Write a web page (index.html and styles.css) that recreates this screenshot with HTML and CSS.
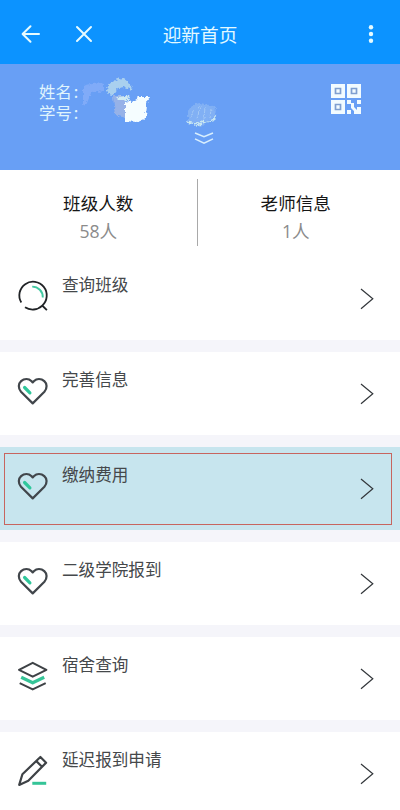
FILE: index.html
```html
<!DOCTYPE html>
<html lang="zh-CN">
<head>
<meta charset="utf-8">
<title>迎新首页</title>
<link rel="stylesheet" href="styles.css">
</head>
<body>
<svg class="defs" width="0" height="0">
  <symbol id="heart" viewBox="0 0 32 32">
    <path d="M15.700 28.400 4 16.700C.9 13.300 1.300 8.600 4.100 6.100 7.300 3.200 11.800 3.400 14.300 6l1.400 1.400L17.100 6c2.500-2.600 7-2.800 10.200.1 2.800 2.500 3.200 7.200.1 10.600z" fill="none" stroke="#41464b" stroke-width="2.200" stroke-linejoin="round"/>
    <path d="m7.600 12.500 5.300 5.300" stroke="#2fc79b" stroke-width="3.200" stroke-linecap="round"/>
  </symbol>
  <symbol id="chevron" viewBox="0 0 14 22">
    <path d="m1 1 11.800 9.800L1 20.800" fill="none" stroke="#33373b" stroke-width="1.200"/>
  </symbol>
</svg>

<header class="bar">
  <svg class="back" width="20" height="20" viewBox="0 0 20 20"><path d="M18 10H2M9.500 2.200 1.600 10l7.900 7.800"/></svg>
  <svg class="close" width="18" height="18" viewBox="0 0 18 18"><path d="m2 2 14 14M16 2 2 16"/></svg>
  <h1>迎新首页</h1>
  <svg class="more" width="6" height="20" viewBox="0 0 6 20"><circle cx="3" cy="3.200" r="2.200"/><circle cx="3" cy="10" r="2.200"/><circle cx="3" cy="16.800" r="2.200"/></svg>
</header>

<section class="profile">
  <p class="names">姓名<span>:</span><br>学号<span>:</span></p>
  <svg class="smudge" width="140" height="56" viewBox="80 74 140 56">
    <defs>
      <filter id="rough" x="-20%" y="-20%" width="140%" height="140%">
        <feTurbulence type="fractalNoise" baseFrequency=".35" numOctaves="2" seed="4" result="n"/>
        <feDisplacementMap in="SourceGraphic" in2="n" scale="5" xChannelSelector="R" yChannelSelector="G"/>
        <feGaussianBlur stdDeviation=".5"/>
      </filter>
    </defs>
    <g filter="url(#rough)">
      <path d="M83 86c6-2 13-3 21-2v7l-13 2-4 10-4 2z" fill="#8db1fb" opacity=".65"/>
      <path d="M107 90c1-7 7-11 16-12l5 4 5 8-9-3c-6 0-8 3-10 8-5 0-7-2-7-5z" fill="#b5d8ee" opacity=".85"/>
      <path d="M113 96h13v22l-11-3z" fill="#9eb5e6" opacity=".85"/>
      <path d="m116 97 12-1 2 4-10 1z" fill="#cfeaf2"/>
      <path d="m125 101 8 1 6-5 11 0-3 6-1 15-9 4-12-1z" fill="#f5fdff"/>
      <path d="M188 112c2-6 7-9 13-9l7 2 8 2-1 11-7 2-7 7-13-5z" fill="#8fb8f5" opacity=".65"/>
      <path d="m187 122 8 2 5-3 6 1 9-3v-3M196 126l6-2" fill="none" stroke="#c8e7f2" stroke-width="1.500"/>
      <path d="m191 117 3-9m3 11 3-13m4 13 1-12m5 11 1-9" fill="none" stroke="#add1f5" stroke-width=".8"/>
    </g>
  </svg>
  <svg class="down" width="20" height="15" viewBox="0 0 20 15"><path d="m1 2 9 3.800L19 2M1 7.800l9 4.400 9-4.400"/></svg>
  <svg class="qr" width="30" height="30" viewBox="0 0 30 30">
    <path d="M0 0h14v14H0zM16 0h14v14H16zM0 16h14v14H0zM16 16h4v4h-4zM26 16h4v4h-4zM20 19h3v4l3 3v-3h4v7h-7v-3l-3-3zM16 26h4v4h-4z" fill="#f2fbff"/>
    <path d="M4.500 4.500h5v5h-5zM20.500 4.500h5v5h-5zM4.500 20.500h5v5h-5z" fill="none" stroke="#7f9fd0" stroke-width="1.700"/>
  </svg>
</section>

<section class="stats">
  <div class="stat"><strong>班级人数</strong><span>58人</span></div>
  <div class="stat"><strong>老师信息</strong><span>1人</span></div>
</section>

<main class="list">
  <div class="row">
    <svg class="icon" viewBox="0 0 32 32"><path d="M4.300 22.500A13.700 13.700 0 1 1 25.200 25.600 13.700 13.700 0 0 1 8 27.300M25.200 25.500l4.700 4.700" fill="none" stroke="#202326" stroke-width="1.800"/><path d="M15.200 6.600A10.500 10.500 0 0 1 25.800 17.500" fill="none" stroke="#42c9a2" stroke-width="1.900"/></svg>
    <span class="label">查询班级</span><svg class="chevron"><use href="#chevron"/></svg>
  </div>
  <div class="row">
    <svg class="icon"><use href="#heart"/></svg>
    <span class="label">完善信息</span><svg class="chevron"><use href="#chevron"/></svg>
  </div>
  <div class="row active">
    <svg class="icon"><use href="#heart"/></svg>
    <span class="label">缴纳费用</span><svg class="chevron"><use href="#chevron"/></svg>
  </div>
  <div class="row">
    <svg class="icon"><use href="#heart"/></svg>
    <span class="label">二级学院报到</span><svg class="chevron"><use href="#chevron"/></svg>
  </div>
  <div class="row">
    <svg class="icon" viewBox="0 0 32 32"><g fill="none" stroke-linejoin="round"><path d="m15.700 2.800 13.700 7-13.700 6.900L2 9.800z" stroke="#3e4246" stroke-width="2"/><path d="m4.200 17.200 11.500 5.600 11.500-5.600" stroke="#35c497" stroke-width="3.200"/><path d="M2.700 23.200 15.700 29.400l13-6.200" stroke="#3e4246" stroke-width="2"/></g></svg>
    <span class="label">宿舍查询</span><svg class="chevron"><use href="#chevron"/></svg>
  </div>
  <div class="row">
    <svg class="icon" viewBox="0 0 32 32"><path d="m2.200 29.900 3.200-10.600L23.400 2l5.700 5.700L11.300 25.700zM19.300 6.100l5.700 5.700" fill="none" stroke="#3e4246" stroke-width="2.200" stroke-linejoin="round"/><path d="M15.300 28.300H29.200" stroke="#35c497" stroke-width="3"/></svg>
    <span class="label">延迟报到申请</span><svg class="chevron"><use href="#chevron"/></svg>
  </div>
</main>
</body>
</html>
```
FILE: styles.css
```css
* { box-sizing: border-box; }
body {
  margin: 0;
  height: 810px;
  overflow: hidden;
  background: #fff;
  color: #45484b;
  font-family: "Noto Sans CJK SC", sans-serif;
}
h1, p { margin: 0; font-weight: 400; }
svg { flex: none; display: block; }
.defs { position: absolute; }

.bar {
  height: 64px;
  display: grid;
  grid-template-columns: 21px 55px 40px 168px 1fr 6px;
  padding: 4px 26px 0 0;
  align-items: center;
  background: #0c93ff;
}
.bar svg { fill: none; stroke: #e6fbff; stroke-width: 2; stroke-linecap: round; stroke-linejoin: round; }
.bar .back { grid-column: 2; }
.bar .close { grid-column: 3; margin-left: -1px; }
.bar h1 { grid-column: 4; font-size: 18.700px; line-height: 28px; text-align: center; color: #e3f9ff; }
.bar .more { grid-column: 6; fill: #e6fbff; stroke: none; }

.profile {
  position: relative;
  height: 106px;
  padding: 17px 39px;
  display: flex;
  justify-content: space-between;
  background: #689ff5;
}
.names { font-size: 16.400px; line-height: 20.500px; color: #e0f5fd; }
.names span { margin-left: 2px; }
.smudge { position: absolute; left: 80px; top: 10px; }
.down { position: absolute; left: 194px; top: 67px; fill: none; stroke: #d9effd; stroke-width: 1.500; }
.qr { margin-top: 3px; }

.stats { height: 87px; display: flex; padding: 9px 6px 11px 0; }
.stat {
  flex: 1;
  height: 67px;
  padding-top: 10px;
  display: flex;
  flex-direction: column;
  align-items: center;
  font-size: 17.600px;
  line-height: 28px;
}
.stat + .stat { border-left: 1px solid #a9a9a9; }
.stat strong { font-weight: 400; color: #161616; }
.stat span { font-family: "Open Sans", "Noto Sans CJK SC", sans-serif; color: #8b8b8b; }

.list { display: flex; flex-direction: column; gap: 12px; background: #f5f5fa; }
.row {
  position: relative;
  flex: none;
  height: 83px;
  padding: 0 26px 0 17px;
  display: flex;
  align-items: flex-start;
  background: #fff;
}
.icon { width: 32px; height: 32px; margin-top: 23px; }
.label { flex: 1; margin: 15px 0 0 13px; font-size: 16.600px; line-height: 24px; }
.chevron { width: 14px; height: 22px; margin-top: 31px; }
.active { background: #c7e5ee; }
.active::after {
  content: "";
  position: absolute;
  left: 4px;
  right: 8px;
  top: 6px;
  bottom: 5px;
  border: 1px solid #c7655f;
}
```
